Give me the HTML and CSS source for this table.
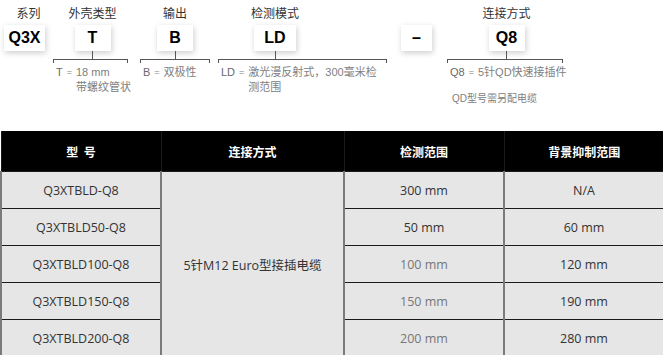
FILE: index.html
```html
<!DOCTYPE html>
<html lang="zh">
<head>
<meta charset="utf-8">
<title>Q3X 型号说明</title>
<link rel="stylesheet" href="styles.css">
</head>
<body>
<div class="code">
  <div class="grp g1">
    <div class="head">
      <div class="lbl lbl-q3x">系列</div>
      <div class="box box-q3x">Q3X</div>
    </div>
  </div>
  <div class="grp g2">
    <div class="head head-g2">
      <div class="lbl">外壳类型</div>
      <div class="box">T</div>
      <div class="stem"></div>
    </div>
    <div class="bracket"></div>
    <div class="desc"><span class="k">T</span><span class="eq">=</span><span class="v">18 mm<br>带螺纹管状</span></div>
  </div>
  <div class="grp g3">
    <div class="head">
      <div class="lbl">输出</div>
      <div class="box">B</div>
      <div class="stem"></div>
    </div>
    <div class="bracket"></div>
    <div class="desc"><span class="k">B</span><span class="eq">=</span><span class="v">双极性</span></div>
  </div>
  <div class="grp g4">
    <div class="head head-g4">
      <div class="lbl">检测模式</div>
      <div class="box box-ld">LD</div>
      <div class="stem"></div>
    </div>
    <div class="bracket"></div>
    <div class="desc"><span class="k">LD</span><span class="eq">=</span><span class="v">激光漫反射式，300毫米检<br>测范围</span></div>
  </div>
  <div class="grp g5">
    <div class="box box-dash">–</div>
  </div>
  <div class="grp g6">
    <div class="head head-g6">
      <div class="lbl">连接方式</div>
      <div class="box">Q8</div>
      <div class="stem"></div>
    </div>
    <div class="bracket"></div>
    <div class="desc"><span class="k">Q8</span><span class="eq">=</span><span class="v">5针QD快速接插件</span></div>
    <div class="note">QD型号需另配电缆</div>
  </div>
</div>

<table class="spec">
  <colgroup>
    <col class="c1"><col class="c2"><col class="c3"><col class="c4">
  </colgroup>
  <thead>
    <tr><th>型&nbsp;&nbsp;号</th><th>连接方式</th><th>检测范围</th><th>背景抑制范围</th></tr>
  </thead>
  <tbody>
    <tr><td>Q3XTBLD-Q8</td><td class="conn" rowspan="5">5针M12 Euro型接插电缆</td><td>300 mm</td><td>N/A</td></tr>
    <tr><td>Q3XTBLD50-Q8</td><td>50 mm</td><td>60 mm</td></tr>
    <tr><td>Q3XTBLD100-Q8</td><td class="lt">100 mm</td><td>120 mm</td></tr>
    <tr><td>Q3XTBLD150-Q8</td><td class="lt">150 mm</td><td>190 mm</td></tr>
    <tr><td>Q3XTBLD200-Q8</td><td class="lt">200 mm</td><td>280 mm</td></tr>
  </tbody>
</table>
</body>
</html>
```
FILE: styles.css
```css
html, body {
  margin: 0;
  padding: 0;
  background: #fff;
}
body {
  width: 663px;
  height: 355px;
  overflow: hidden;
  font-family: "Liberation Sans", "Noto Sans CJK SC", sans-serif;
}

/* ---------- model code ---------- */
.code {
  height: 131px;
  box-sizing: border-box;
  padding-top: 5px;
  display: flex;
  align-items: flex-start;
}
.grp {
  display: flex;
  flex-direction: column;
}
.g1 { margin-left: 4px; width: 41px; }
.g2 { margin-left: 8px; width: 75px; }
.g3 { margin-left: 12px; width: 70px; }
.g4 { margin-left: 8px; width: 169px; }
.g5 { margin-left: 14px; width: 31px; padding-top: 20px; }
.g6 { margin-left: 15px; width: 116px; }

.head {
  display: flex;
  flex-direction: column;
  align-items: center;
}
.head-g2 { padding-left: 4px; }
.head-g4 { width: 114px; }
.head-g6 { padding-left: 3px; }

.lbl {
  height: 16px;
  line-height: 16px;
  font-size: 12px;
  color: #333;
  white-space: nowrap;
  font-family: "Noto Sans CJK SC", sans-serif;
}
.lbl-q3x { padding-left: 8px; }

.box {
  margin-top: 4px;
  width: 36px;
  height: 26px;
  display: flex;
  align-items: center;
  justify-content: center;
  background: #fff;
  box-shadow: 1px 2px 6px rgba(0, 0, 0, 0.2);
  font-size: 16px;
  font-weight: bold;
  color: #000;
}
.box-q3x { width: 41px; }
.box-ld { width: 42px; }
.box-dash { margin-top: 0; width: 31px; }

.stem {
  width: 1px;
  height: 8px;
  background: #555;
}
.bracket {
  height: 4px;
  box-sizing: border-box;
  border: 1px solid #555;
  border-bottom: none;
}

.desc {
  margin-top: 2px;
  padding-left: 3px;
  display: flex;
  align-items: flex-start;
  font-size: 11px;
  line-height: 15px;
  color: #808080;
  white-space: nowrap;
}
.k { color: #6a6a6a; }
.eq {
  font-size: 9px;
  margin: 0 4px;
}
.note {
  margin-top: 12px;
  padding-left: 5px;
  font-size: 10px;
  line-height: 14px;
  color: #808080;
  white-space: nowrap;
}

/* ---------- table ---------- */
.spec {
  width: 663px;
  border-collapse: collapse;
  table-layout: fixed;
}
.c1 { width: 160px; }
.c2 { width: 183px; }
.c3 { width: 160px; }
.c4 { width: 160px; }

.spec th {
  height: 40px;
  padding: 0;
  background: #000;
  color: #fff;
  font-family: "Noto Sans CJK SC", sans-serif;
  font-size: 12px;
  font-weight: bold;
  text-align: center;
  border-left: 1px solid #1a1a1a;
}
.spec td {
  height: 36px;
  padding: 0;
  background: #e6e6e6;
  text-align: center;
  font-family: "Open Sans", "Noto Sans CJK SC", sans-serif;
  font-size: 12.5px;
  color: #333;
  border-top: 1px solid #1a1a1a;
  border-left: 2px solid #7a7a7a;
  border-right: 2px solid #7a7a7a;
}
.spec td.lt { color: #777; }
.spec td.conn { color: #333; }
```
